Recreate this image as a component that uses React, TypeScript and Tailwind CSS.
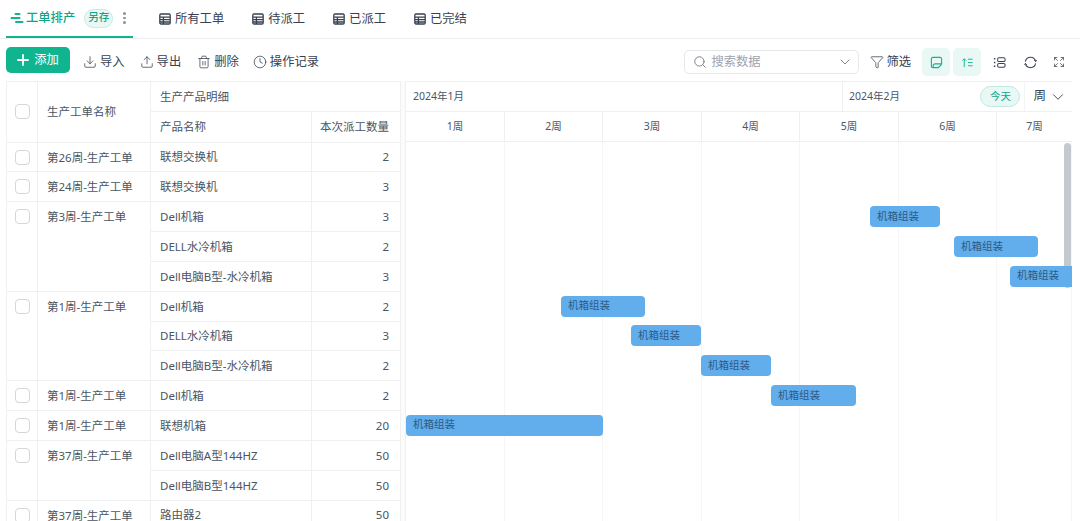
import React from 'react';
import { ChevronDown, Clock, Download, Expand, Filter, Search, Trash2, Upload } from 'lucide-react';

const TableIcon = () => (
  <svg viewBox="0 0 12 12" className="w-[12px] h-[12px] text-[#374151]" fill="none" stroke="currentColor" strokeWidth="1.3">
    <rect x="0.8" y="1" width="10.4" height="10" rx="1.2" />
    <path d="M1 4.2h10M1 6.6h10M1 9h10M4.4 4.2V11" />
  </svg>
);

const LogoIcon = () => (
  <svg viewBox="0 0 14 12" className="w-[14px] h-[12px] text-[#10b48f]" fill="none" stroke="currentColor" strokeWidth="2" strokeLinecap="round">
    <path d="M5.5 2h4M1.5 6h8M6 10h6.5" />
  </svg>
);

const tabs = ['所有工单', '待派工', '已派工', '已完结'];

const groups = [
  { name: '第26周-生产工单', items: [['联想交换机', '2']] },
  { name: '第24周-生产工单', items: [['联想交换机', '3']] },
  { name: '第3周-生产工单', items: [['Dell机箱', '3'], ['DELL水冷机箱', '2'], ['Dell电脑B型-水冷机箱', '3']] },
  { name: '第1周-生产工单', items: [['Dell机箱', '2'], ['DELL水冷机箱', '3'], ['Dell电脑B型-水冷机箱', '2']] },
  { name: '第1周-生产工单', items: [['Dell机箱', '2']] },
  { name: '第1周-生产工单', items: [['联想机箱', '20']] },
  { name: '第37周-生产工单', items: [['Dell电脑A型144HZ', '50'], ['Dell电脑B型144HZ', '50']] },
  { name: '第37周-生产工单', items: [['路由器2', '50']] },
];

const weeks = [
  { label: '1周', width: 'w-[99px]' },
  { label: '2周', width: 'w-[98px]' },
  { label: '3周', width: 'w-[99px]' },
  { label: '4周', width: 'w-[98px]' },
  { label: '5周', width: 'w-[99px]' },
  { label: '6周', width: 'w-[98px]' },
  { label: '7周', width: 'w-[75px]' },
];

// bar positions on the timeline: row index, left offset and width in px
const bars = [
  { row: 2, left: 464, width: 70 },
  { row: 3, left: 548, width: 84 },
  { row: 4, left: 604, width: 70 },
  { row: 5, left: 155, width: 84 },
  { row: 6, left: 225, width: 70 },
  { row: 7, left: 295, width: 70 },
  { row: 8, left: 365, width: 85 },
  { row: 9, left: 0, width: 197 },
];

const Checkbox = () => (
  <div className="w-[15px] h-[15px] rounded-[4px] border border-[#d4d6d9] bg-white" />
);

export default function App() {
  return (
    <div
      className="w-[1080px] h-[521px] overflow-hidden bg-white text-[11.5px] text-[#4b5563]"
      style={{ fontFamily: '"Noto Sans", "Noto Sans CJK SC", sans-serif' }}
    >
      {/* Tabs */}
      <div className="h-[39px] flex border-b border-[#eceef0] pl-[6px]">
        <div className="w-[127px] h-[38px] flex items-center pl-[4px] border-b-2 border-[#10b48f]">
          <LogoIcon />
          <span className="ml-[2px] font-medium text-[#10a685] text-[12.3px]">工单排产</span>
          <span className="ml-[9px] w-[29px] h-[19px] rounded-full border border-[#c5ebe2] bg-[#e9f8f4] text-[#10a685] text-[10.5px] font-medium flex items-center justify-center">另存</span>
          <span className="ml-[10px] flex flex-col gap-[2px]">
            <i className="w-[2.5px] h-[2.5px] rounded-full bg-[#8b929c]" />
            <i className="w-[2.5px] h-[2.5px] rounded-full bg-[#8b929c]" />
            <i className="w-[2.5px] h-[2.5px] rounded-full bg-[#8b929c]" />
          </span>
        </div>
        <div className="flex items-center gap-[28px] pl-[26px] text-[#374151] text-[12.3px]">
          {tabs.map((tab) => (
            <div key={tab} className="flex items-center gap-[4px]">
              <TableIcon />
              <span>{tab}</span>
            </div>
          ))}
        </div>
      </div>

      {/* Toolbar */}
      <div className="h-[42px] flex items-center pt-[4px] pl-[6px] pr-[15px] text-[#374151] text-[12.3px]">
        <button className="w-[64px] h-[26px] mb-[4px] rounded-[5px] bg-[#10b48f] text-white flex items-center justify-center gap-[5px]">
          <svg viewBox="0 0 12 12" className="w-[12px] h-[12px]" stroke="currentColor" strokeWidth="1.8" strokeLinecap="round">
            <path d="M6 1v10M1 6h10" />
          </svg>
          <span>添加</span>
        </button>
        <div className="flex items-center gap-[3px] ml-[13px]"><Download size={14} strokeWidth={1.3} /><span className="pt-[1px]">导入</span></div>
        <div className="flex items-center gap-[3px] ml-[15px]"><Upload size={14} strokeWidth={1.3} /><span className="pt-[1px]">导出</span></div>
        <div className="flex items-center gap-[3px] ml-[16px]"><Trash2 size={14} strokeWidth={1.3} /><span className="pt-[1px]">删除</span></div>
        <div className="flex items-center gap-[3px] ml-[14px]"><Clock size={14} strokeWidth={1.3} /><span className="pt-[1px]">操作记录</span></div>
        <div className="ml-auto w-[175px] h-[24px] rounded-[5px] border border-[#e5e7eb] flex items-center pl-[8px] pr-[5px] text-[#9ca3af]">
          <Search size={14} strokeWidth={1.5} className="text-[#6b7280]" />
          <span className="ml-[4px] pt-[1px]">搜索数据</span>
          <ChevronDown size={16} strokeWidth={1.3} className="ml-auto text-[#6b7280]" />
        </div>
        <div className="flex items-center gap-[2px] ml-[11px]"><Filter size={14} strokeWidth={1.3} /><span className="pt-[1px]">筛选</span></div>
        <div className="ml-[11px] w-[28px] h-[28px] rounded-[5px] bg-[#e9f8f4] flex items-center justify-center text-[#10b48f]">
          <svg viewBox="0 0 14 14" className="w-[13px] h-[13px]" fill="none" stroke="currentColor" strokeWidth="1.2">
            <path d="M4 12.5H3a1.5 1.5 0 0 1-1.5-1.5V3A1.5 1.5 0 0 1 3 1.5h8A1.5 1.5 0 0 1 12.5 3v6M4 12.5c-1.5-2-.5-4 1.5-4h7M4 12.5h5l3.5-3.5" />
          </svg>
        </div>
        <div className="ml-[3px] w-[28px] h-[28px] rounded-[5px] bg-[#e9f8f4] flex items-center justify-center text-[#10b48f]">
          <svg viewBox="0 0 14 14" className="w-[13px] h-[13px]" fill="none" stroke="currentColor" strokeWidth="1">
            <path d="M3.5 12V3M1.5 5l2-2 2 2M7.5 3.5h5M7.5 7h5M7.5 10.5h5" />
          </svg>
        </div>
        <div className="ml-[11px] w-[14px] flex justify-center text-[#374151]">
          <svg viewBox="0 0 14 14" className="w-[13px] h-[13px]" fill="none" stroke="currentColor" strokeWidth="1.1">
            <rect x="5" y="2" width="8" height="4" rx="1.5" />
            <rect x="5" y="8" width="8" height="4" rx="1.5" />
            <path d="M1 3h1.5M1 7h1.5M1 11h1.5" strokeWidth="1.5" />
          </svg>
        </div>
        <svg viewBox="0 0 14 14" className="ml-[18px] w-[13px] h-[13px]" fill="none" stroke="currentColor" strokeWidth="1.1">
          <path d="M1.5 6A5.6 5.6 0 0 1 12.5 6M12.5 8A5.6 5.6 0 0 1 1.5 8" />
          <path d="M11 4.5l1.5 1.5L14 4.5M3 9.5L1.5 8 0 9.5" strokeWidth="1" />
        </svg>
        <Expand size={12} strokeWidth={1.4} className="ml-[16px]" />
      </div>

      {/* Table and timeline */}
      <div className="flex pl-[6px] h-[440px] overflow-hidden">
        <div className="w-[394px] shrink-0 grid grid-cols-[31px_113px_161px_89px] grid-rows-[30px_30.5px] auto-rows-[29.85px] border-l border-t border-[#eef0f2]">
          <div className="row-span-2 border-r border-b border-[#eef0f2] flex items-center justify-center"><Checkbox /></div>
          <div className="row-span-2 border-r border-b border-[#eef0f2] flex items-center pl-[9px]">生产工单名称</div>
          <div className="col-span-2 border-b border-[#eef0f2] flex items-center pl-[9px]">生产产品明细</div>
          <div className="border-r border-b border-[#eef0f2] flex items-center pl-[9px]">产品名称</div>
          <div className="border-b border-[#eef0f2] flex items-center justify-end pr-[12px]">本次派工数量</div>

          {groups.map((group, g) => (
            <React.Fragment key={g}>
              <div
                className="border-r border-b border-[#eef0f2] flex justify-center pt-[7px]"
                style={{ gridRow: `span ${group.items.length}` }}
              >
                <Checkbox />
              </div>
              <div
                className="border-r border-b border-[#eef0f2] pl-[9px] pt-[6px] leading-[18px] whitespace-nowrap"
                style={{ gridRow: `span ${group.items.length}` }}
              >
                {group.name}
              </div>
              {group.items.map(([product, qty], i) => (
                <React.Fragment key={i}>
                  <div className="border-r border-b border-[#eef0f2] flex items-center pl-[9px] whitespace-nowrap">{product}</div>
                  <div className="border-b border-[#eef0f2] flex items-center justify-end pr-[12px]">{qty}</div>
                </React.Fragment>
              ))}
            </React.Fragment>
          ))}
        </div>

        <div className="w-[6px] shrink-0 border-l border-r border-[#eef0f2] bg-[#fbfbfc]" />

        <div className="w-[666px] shrink-0 flex flex-col border-t border-[#eef0f2] overflow-hidden">
          <div className="h-[30px] shrink-0 flex items-center border-b border-[#eef0f2] text-[10.5px]">
            <div className="w-[436px] pl-[7px] pt-[1px]">2024年1月</div>
            <div className="h-full flex-1 flex items-center border-l border-[#eef0f2] pl-[6px]">
              <span className="pt-[1px]">2024年2月</span>
              <span className="ml-auto w-[40px] h-[21px] rounded-full border border-[#bfe9df] bg-[#e9f8f4] text-[#10a685] flex items-center justify-center">今天</span>
              <span className="ml-[4px] h-full border-l border-[#f3f4f6] pl-[8px] pr-[5px] flex items-center gap-[3px] text-[12.5px] text-[#374151]">
                周 <ChevronDown size={18} strokeWidth={1.2} />
              </span>
            </div>
          </div>
          <div className="h-[30px] shrink-0 flex border-b border-[#eef0f2] text-[10.5px]">
            {weeks.map((week) => (
              <div key={week.label} className={`${week.width} flex items-center justify-center border-r border-[#eef0f2] last:border-r-0`}>
                {week.label}
              </div>
            ))}
          </div>
          <div className="relative flex-1 flex overflow-hidden">
            {weeks.map((week) => (
              <div key={week.label} className={`${week.width} border-r border-[#f5f6f7] last:border-r-0`} />
            ))}
            <div className="absolute right-[1px] top-[1px] w-[7px] h-[145px] rounded-full bg-[#9ca3af]/60" />
            {bars.map((bar) => (
              <div
                key={bar.row}
                className="absolute h-[21px] rounded-[4px] bg-[#62aeec] text-[#2c5a85] text-[10.5px] flex items-center pl-[7px] whitespace-nowrap"
                style={{ top: bar.row * 29.8 + 4.5, left: bar.left, width: bar.width }}
              >
                机箱组装
              </div>
            ))}
          </div>
        </div>
      </div>
    </div>
  );
}
